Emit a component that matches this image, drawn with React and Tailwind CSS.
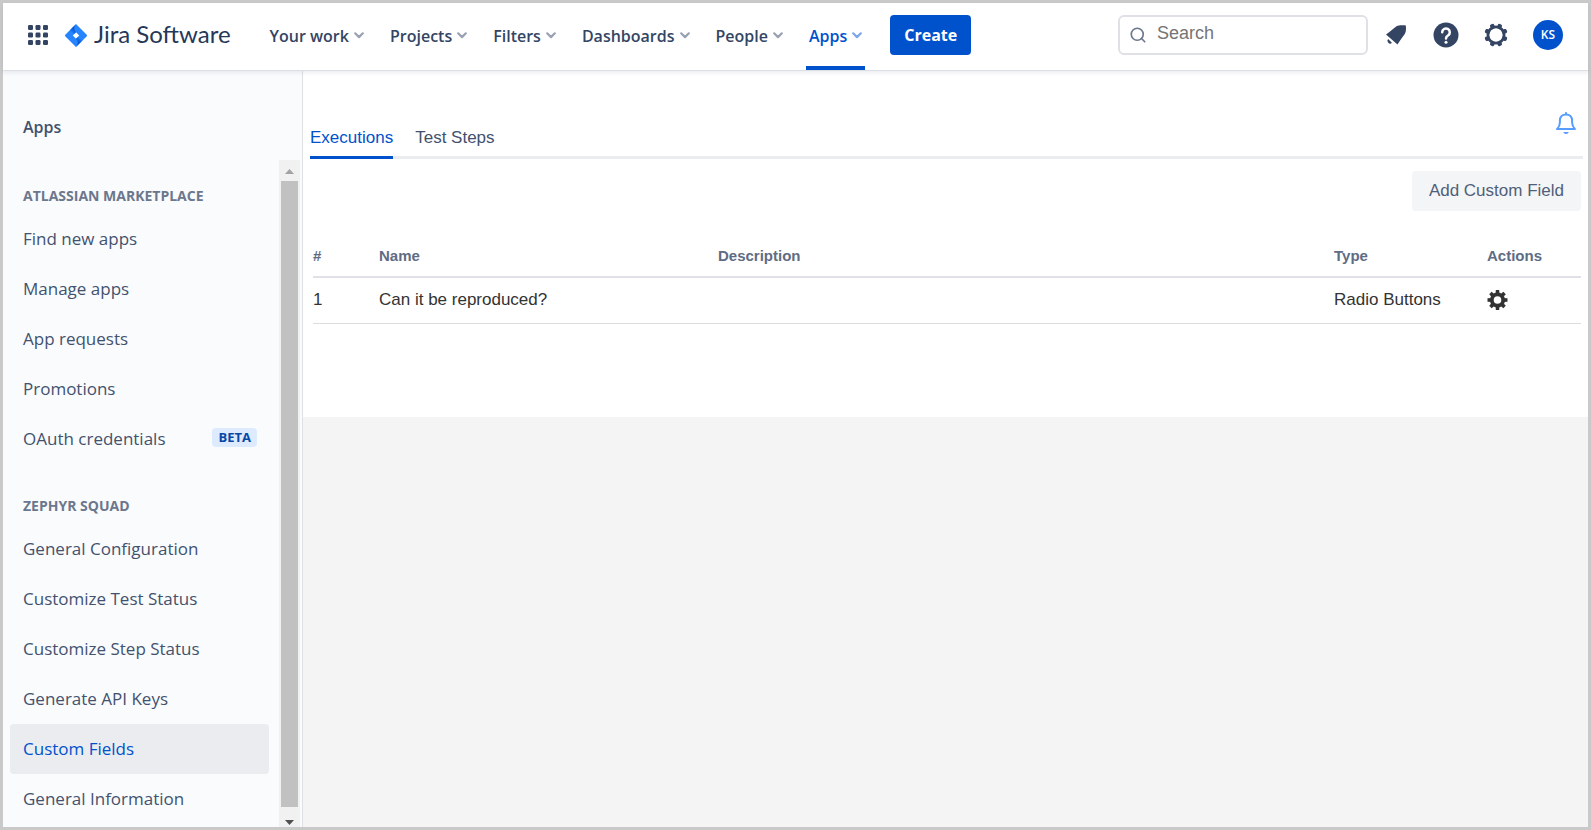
import { Search } from 'lucide-react'

const NAV = [
  { label: 'Your work' },
  { label: 'Projects' },
  { label: 'Filters' },
  { label: 'Dashboards' },
  { label: 'People' },
  { label: 'Apps', active: true },
]

const SECTIONS = [
  {
    title: 'Atlassian Marketplace',
    items: [
      { label: 'Find new apps' },
      { label: 'Manage apps' },
      { label: 'App requests' },
      { label: 'Promotions' },
      { label: 'OAuth credentials', badge: 'BETA' },
    ],
  },
  {
    title: 'Zephyr Squad',
    items: [
      { label: 'General Configuration' },
      { label: 'Customize Test Status' },
      { label: 'Customize Step Status' },
      { label: 'Generate API Keys' },
      { label: 'Custom Fields', active: true },
      { label: 'General Information' },
    ],
  },
]

const FIELDS = [
  { id: 1, name: 'Can it be reproduced?', description: '', type: 'Radio Buttons' },
]

function SwitcherIcon() {
  return (
    <svg width="20" height="20" viewBox="0 0 20 20" fill="#344563">
      {[0, 7.5, 15].map((y) =>
        [0, 7.5, 15].map((x) => <rect key={`${x}-${y}`} x={x} y={y} width="5" height="5" rx="1.2" />)
      )}
    </svg>
  )
}

function JiraMark() {
  return (
    <svg width="22" height="23" viewBox="0 0 22 23">
      <defs>
        <linearGradient id="markTop" x1="10" y1="4" x2="6" y2="9" gradientUnits="userSpaceOnUse">
          <stop offset="0.1" stopColor="#0052cc" />
          <stop offset="1" stopColor="#2684ff" />
        </linearGradient>
        <linearGradient id="markBottom" x1="12" y1="19" x2="16" y2="14" gradientUnits="userSpaceOnUse">
          <stop offset="0.1" stopColor="#0052cc" />
          <stop offset="1" stopColor="#2684ff" />
        </linearGradient>
      </defs>
      <path
        fillRule="evenodd"
        fill="#2684ff"
        d="M11 0 21.5 10.6a1.2 1.2 0 0 1 0 1.8L11 23 .5 12.4a1.2 1.2 0 0 1 0-1.8zM11 8.2 7.8 11.5 11 14.8l3.2-3.3z"
      />
      <path fill="url(#markTop)" d="M11 8.2A5.4 5.4 0 0 1 11 .1L4.6 6.5l4.7 3.4z" />
      <path fill="url(#markBottom)" d="M11 14.8a5.4 5.4 0 0 1 0 8.1l6.4-6.4-4.7-3.4z" />
    </svg>
  )
}

function Chevron() {
  return (
    <svg width="10" height="7" viewBox="0 0 10 7" fill="none" stroke="currentColor" strokeWidth="2.2" strokeLinecap="round" strokeLinejoin="round">
      <path d="M1.2 1.3 5 5.1l3.8-3.8" />
    </svg>
  )
}

function NotificationIcon() {
  return (
    <svg width="20" height="20" viewBox="0 0 20 20" fill="#344563">
      <path d="M0 9.4C4.4 6.6 7.6 3.3 10.5 1.300 12.8-.2 16.500.1 19 .3q.9.1.9 1c.2 2.700.2 5.700-1.300 8-2 3-4.800 6.200-7.100 10.300z" />
      <path d="M2.200 14.100 5.900 17.700a2.500 2.500 0 0 1-3.700-3.600z" />
    </svg>
  )
}

function HelpIcon() {
  return (
    <svg width="26" height="26" viewBox="0 0 26 26">
      <circle cx="13" cy="13" r="12.5" fill="#344563" />
      <path d="M9.200 10.300a3.800 3.800 0 1 1 5.800 3.200c-1.300.8-2 1.300-2 3" fill="none" stroke="#fff" strokeWidth="2.5" strokeLinecap="round" />
      <circle cx="13" cy="20.2" r="1.5" fill="#fff" />
    </svg>
  )
}

function SettingsIcon() {
  return (
    <svg width="24" height="24" viewBox="0 0 24 24" fill="#344563">
      {[22.5, 67.5, 112.5, 157.5, 202.5, 247.5, 292.5, 337.5].map((angle) => (
        <rect key={angle} x="9.8" y=".3" width="4.4" height="5" rx="1.6" transform={`rotate(${angle} 12 12)`} />
      ))}
      <circle cx="12" cy="12" r="8.1" fill="none" stroke="#344563" strokeWidth="2.8" />
    </svg>
  )
}

function BellIcon() {
  return (
    <svg width="20" height="23" viewBox="0 0 20 23" fill="none" stroke="#579dff" strokeWidth="2" strokeLinejoin="round" strokeLinecap="round">
      <path d="M10 1v1.400M1 17.100h18c-1.700-1.700-2.900-3.700-2.900-6.600V8.600C16.100 4.800 13.500 2.400 10 2.400S3.900 4.800 3.900 8.600v1.900c0 2.900-1.200 4.900-2.900 6.600z" />
      <path d="M7.200 19.900h5.600a2.900 2.900 0 0 1-5.600 0z" fill="#579dff" stroke="none" />
    </svg>
  )
}

function CogIcon() {
  return (
    <svg width="21" height="20" viewBox="0 0 20 20" fill="#333">
      {[0, 45, 90, 135, 180, 225, 270, 315].map((angle) => (
        <path key={angle} d="M8 5 8.300 0h3.400l.3 5z" transform={`rotate(${angle} 10 10)`} />
      ))}
      <circle cx="10" cy="10" r="5.7" fill="none" stroke="#333" strokeWidth="3.8" />
    </svg>
  )
}

function Header() {
  return (
    <header className="relative z-10 flex h-[68px] shrink-0 items-center border-b border-[#dcdfe5] bg-white px-[25px] pb-[3px] shadow-[0_2px_4px_rgba(9,30,66,0.08)]">
      <button aria-label="Switch to"><SwitcherIcon /></button>
      <a href="#home" className="ml-[17px] flex items-center gap-[7px] font-[Lato,sans-serif] text-[24px] leading-6 text-[#253858]">
        <JiraMark />
        <span className="pb-[3px]">Jira Software</span>
      </a>
      <nav className="ml-9 -mb-[3px] flex gap-5 self-stretch">
        {NAV.map((item) => (
          <button
            key={item.label}
            className={`flex items-center gap-[5px] border-y-4 border-t-transparent px-[3px] pb-[2px] text-[16px] font-semibold whitespace-nowrap ${
              item.active ? 'border-b-[#0052cc] text-[#0052cc]' : 'border-b-transparent text-[#344563]'
            }`}
          >
            {item.label}
            <span className={item.active ? 'text-[#7ea6e8]' : 'text-[#99a1b3]'}><Chevron /></span>
          </button>
        ))}
      </nav>
      <button className="ml-[25px] h-10 rounded-[4px] bg-[#0052cc] px-[14px] text-[16px] font-bold text-white">
        Create
      </button>
      <div className="ml-auto flex items-center">
        <label className="flex h-10 w-[250px] items-center gap-[10px] rounded-[6px] border-2 border-[#dfe1e6] px-[9px]">
          <Search size={18} strokeWidth={2.2} color="#6b778c" className="shrink-0" />
          <input
            type="search"
            aria-label="Search"
            placeholder="Search"
            className="w-full min-w-0 pb-1 font-['Liberation_Sans',sans-serif] text-[18px] leading-5 outline-none placeholder:text-[#757575]"
          />
        </label>
        <button aria-label="Notifications" className="ml-[18px]"><NotificationIcon /></button>
        <button aria-label="Help" className="ml-[27px]"><HelpIcon /></button>
        <button aria-label="Settings" className="ml-[25px]"><SettingsIcon /></button>
        <button aria-label="Profile" className="ml-[25px] size-[30px] rounded-full bg-[#0052cc] text-[12px] font-semibold text-white">
          KS
        </button>
      </div>
    </header>
  )
}

function Scrollbar() {
  return (
    <div aria-hidden="true" className="flex w-[21px] shrink-0 flex-col items-center bg-[#f1f1f1]">
      <svg width="9" height="21" viewBox="0 0 9 21" fill="#a3a3a3"><path d="M0 14h9L4.500 9z" /></svg>
      <div className="w-[17px] flex-1 bg-[#c1c1c1]" />
      <svg width="9" height="20" viewBox="0 0 9 20" fill="#505050"><path d="M0 13h9l-4.500 5z" /></svg>
    </div>
  )
}

function Sidebar() {
  return (
    <aside className="flex w-[300px] shrink-0 flex-col border-r border-[#dfe0e3] bg-[#fafbfd]">
      <h1 className="px-5 pt-11 pb-[21px] text-[16px] leading-6 font-semibold text-[#42526e]">Apps</h1>
      <div className="flex min-h-0 flex-1 pr-[2px]">
        <div className="flex min-w-0 flex-1 flex-col gap-8 overflow-hidden pt-[26px] pr-[10px] pl-[7px]">
          {SECTIONS.map((section) => (
            <section key={section.title}>
              <h2 className="mb-2 px-[13px] text-[14px] leading-5 font-bold text-[#6b778c] uppercase">{section.title}</h2>
              {section.items.map((item) => (
                <a
                  key={item.label}
                  href="#"
                  className={`flex h-[50px] items-center justify-between rounded-[4px] pr-3 pl-[13px] text-[17px] ${
                    item.active ? 'bg-[#ebecf0] text-[#0052cc]' : 'text-[#42526e]'
                  }`}
                >
                  {item.label}
                  {item.badge && (
                    <span className="mb-[3px] rounded-[4px] bg-[#deebff] px-[6px] text-[13px] leading-[19px] font-bold text-[#0747a6]">
                      {item.badge}
                    </span>
                  )}
                </a>
              ))}
            </section>
          ))}
        </div>
        <Scrollbar />
      </div>
    </aside>
  )
}

function FieldsTable() {
  return (
    <table className="w-full table-fixed text-left">
      <colgroup>
        <col className="w-[66px]" />
        <col className="w-[339px]" />
        <col />
        <col className="w-[153px]" />
        <col className="w-[94px]" />
      </colgroup>
      <thead>
        <tr className="h-11 border-b-2 border-[#dfe1e6] text-[15px] text-[#5e6c84] *:pt-[3px]">
          <th>#</th>
          <th>Name</th>
          <th>Description</th>
          <th>Type</th>
          <th>Actions</th>
        </tr>
      </thead>
      <tbody>
        {FIELDS.map((field) => (
          <tr key={field.id} className="h-[46px] border-b border-[#dddddd] text-[#333333]">
            <td>{field.id}</td>
            <td>{field.name}</td>
            <td>{field.description}</td>
            <td>{field.type}</td>
            <td>
              <button aria-label="Field actions" className="block"><CogIcon /></button>
            </td>
          </tr>
        ))}
      </tbody>
    </table>
  )
}

function Content() {
  return (
    <main className="min-w-0 flex-1 bg-[#f4f4f4] font-['Liberation_Sans',sans-serif] text-[17px] leading-5">
      <div className="bg-white pt-[41px] pr-[5px] pb-[93px] pl-[7px]">
        <div className="flex items-end justify-between border-b-3 border-[#ebecf0]">
          <div role="tablist" className="-mb-[3px] flex gap-[22px]">
            <button role="tab" aria-selected="true" className="border-b-3 border-[#0052cc] pb-2 text-[#0052cc]">Executions</button>
            <button role="tab" aria-selected="false" className="border-b-3 border-transparent pb-2 text-[#42526e]">Test Steps</button>
          </div>
          <button aria-label="Alerts" className="mr-[7px] pb-[21px]"><BellIcon /></button>
        </div>
        <div className="pt-3 pr-[2px] pl-[3px]">
          <div className="mb-[22px] flex justify-end">
            <button className="h-10 rounded-[4px] bg-[#f4f5f7] px-[17px] text-[#505f79]">Add Custom Field</button>
          </div>
          <FieldsTable />
        </div>
      </div>
    </main>
  )
}

export default function App() {
  return (
    <div className="flex h-screen flex-col border-3 border-[#c9c9c9] bg-[#f4f4f4] font-['Open_Sans','Noto_Sans',sans-serif]">
      <Header />
      <div className="flex min-h-0 flex-1">
        <Sidebar />
        <Content />
      </div>
    </div>
  )
}
